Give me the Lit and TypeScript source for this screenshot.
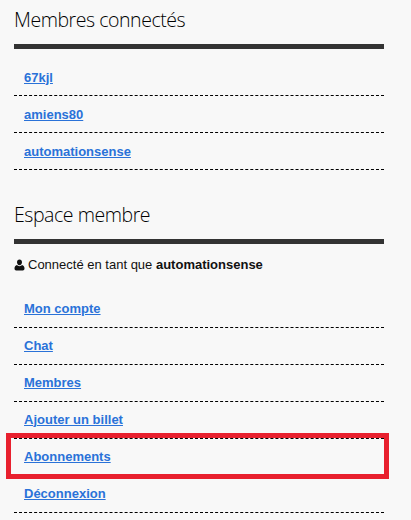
import { LitElement, html, css, svg } from "lit";
import { customElement } from "lit/decorators.js";

const online = ["67kjl", "amiens80", "automationsense"];
const links = ["Mon compte", "Chat", "Membres", "Ajouter un billet", "Abonnements", "Déconnexion"];

@customElement("app-root")
export class AppRoot extends LitElement {
  static styles = css`
    :host { display: block; position: relative; width: 411px; height: 520px; overflow: hidden; background: #f8f8f8; font-family: "Liberation Sans", Arial, sans-serif; color: #000; }
    .side { width: 370px; padding: 7px 0 0 14px; display: flex; flex-direction: column; }
    h2 { margin: 0; font: 300 19.5px/26px "Open Sans", sans-serif; letter-spacing: -0.45px; color: #000; height: 37px; border-bottom: 5px solid #333; }
    .second { margin-top: 32px; }
    ul { list-style: none; margin: 0; padding: 10px 0 0; }
    .second-list { padding-top: 9px; }
    li { height: 36px; border-bottom: 1px dashed #000; padding-left: 10px; display: flex; align-items: center; }
    .second-list li { height: 34px; padding-bottom: 2px; }
    a { font-size: 13px; font-weight: 700; color: #2a72d8; text-decoration: underline; }
    .status { display: flex; align-items: center; gap: 3px; font-size: 13px; height: 17px; margin-top: 12px; margin-bottom: 9px; color: #111; }
    .status svg { width: 11px; height: 12px; flex: none; }
    .mark { position: absolute; left: 6px; top: 433px; width: 383px; height: 46px; box-sizing: border-box; border: 5px solid #e8202e; }
  `;

  render() {
    return html`
      <div class="side">
        <h2>Membres connectés</h2>
        <ul>${online.map((n) => html`<li><a href="#">${n}</a></li>`)}</ul>
        <h2 class="second">Espace membre</h2>
        <div class="status">
          <svg viewBox="0 0 11 12">${svg`<path fill="#111" d="M5.5 0.5C3.9 0.5 3 1.8 3 3.3C3 4.8 3.9 6.3 5.5 6.3C7.1 6.3 8 4.8 8 3.3C8 1.8 7.1 0.5 5.5 0.5ZM3 6C1.4 6.3 0.5 7.6 0.5 9.6C0.5 10.8 1.2 11.5 2.2 11.5H8.8C9.8 11.5 10.5 10.8 10.5 9.6C10.5 7.6 9.6 6.3 8 6C7.4 6.7 6.5 7.2 5.5 7.2C4.5 7.2 3.6 6.7 3 6Z"/>`}</svg>
          <span>Connecté en tant que <b>automationsense</b></span>
        </div>
        <ul class="second-list">${links.map((n) => html`<li><a href="#">${n}</a></li>`)}</ul>
      </div>
      <div class="mark"></div>
    `;
  }
}
